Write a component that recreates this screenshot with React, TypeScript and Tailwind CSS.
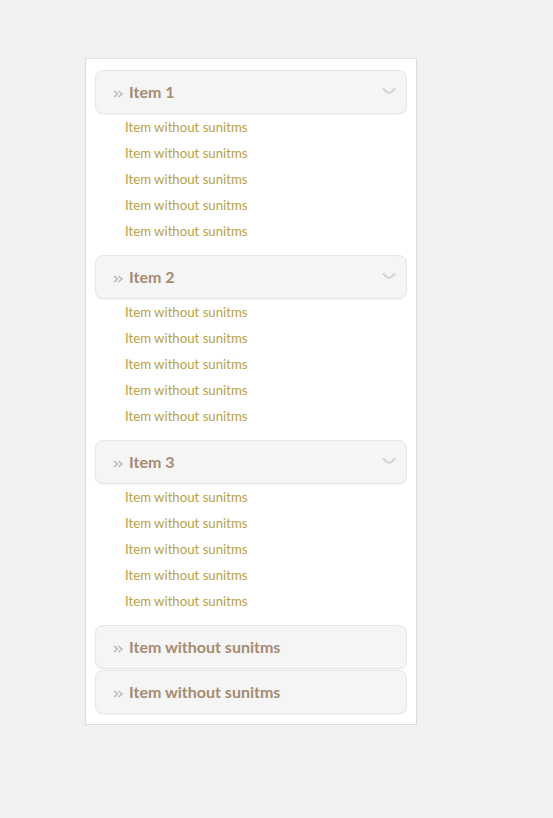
const groups = ['Item 1', 'Item 2', 'Item 3']
const subs = Array.from({ length: 5 }, () => 'Item without sunitms')

const Chevron = () => (
  <svg width="14" height="6" viewBox="0 0 14 6" className="absolute right-[10px] top-[17px]">
    <path d="M1.5 1 Q5 4.5 7 5 Q9 4.5 12.5 1" fill="none" stroke="#d2d2d2" strokeWidth="1.8" strokeLinecap="round" />
  </svg>
)

const Guillemet = () => (
  <svg width="11" height="8" viewBox="0 0 11 8" className="mr-[5px] mt-[3px]">
    <path d="M1 1 L4.5 4 L1 7 M5.5 1 L9 4 L5.5 7" fill="none" stroke="#b5b5b5" strokeWidth="1.4" />
  </svg>
)

const Header = ({ label, open }: { label: string; open?: boolean }) => (
  <div className="relative h-[44px] rounded-lg border border-[#e6e6e6] bg-[#f5f5f5] shadow-[0_1px_1px_rgba(0,0,0,0.04)] flex items-center pl-[17px]">
    <Guillemet />
    <span className="text-[#a48b72] text-[16px] font-bold">{label}</span>
    {open && <Chevron />}
  </div>
)

export default function App() {
  return (
    <div className="min-h-screen bg-[#f1f1f1] pt-[58px] pl-[85px]" style={{ fontFamily: 'Lato, "Open Sans", sans-serif' }}>
      <div className="w-[332px] bg-white border border-[#dddddd] px-[9px] pt-[11px] pb-[10px] flex flex-col">
        {groups.map((g) => (
          <div key={g} className="mb-[11px]">
            <Header label={g} open />
            <ul>
              {subs.map((s, i) => (
                <li key={i} className="h-[26px] flex items-center pl-[30px] pt-[2px] text-[13.2px] text-[#b8a244]">
                  {s}
                </li>
              ))}
            </ul>
          </div>
        ))}
        <div className="flex flex-col gap-[1px]">
          <Header label="Item without sunitms" />
          <Header label="Item without sunitms" />
        </div>
      </div>
    </div>
  )
}
